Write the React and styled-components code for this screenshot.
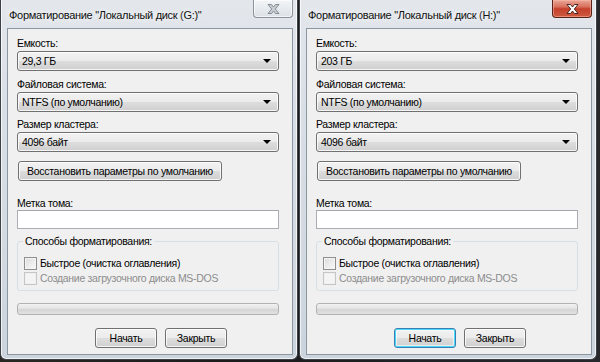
import React from "react";
import styled, { createGlobalStyle, css } from "styled-components";

const GlobalStyle = createGlobalStyle`
  html, body { margin: 0; padding: 0; }
  body {
    width: 600px;
    height: 362px;
    overflow: hidden;
    background: #1c1c1e;
    font-family: "Liberation Sans", Arial, sans-serif;
    font-size: 10.5px;
    letter-spacing: -0.3px;
    color: #000;
  }
`;

const Desktop = styled.div`
  display: flex;
  align-items: flex-start;
  gap: 1px;
  height: 362px;
  background: linear-gradient(90deg, #2a2622 0%, #1b1b1d 40%, #26282c 100%);
`;

const Window = styled.div`
  width: 298px;
  height: 360px;
  box-sizing: border-box;
  display: flex;
  flex-direction: column;
  padding: 0 4px 4px 6px;
  border: 1px solid #3d4248;
  border-top: none;
  border-radius: 0 0 6px 6px;
  background: linear-gradient(180deg, #e3e7ec 0%, #d9dfe6 30%, #d2d9e1 70%, #cbd3dc 100%);
  box-shadow: inset 1px 0 0 rgba(255, 255, 255, 0.7), inset -1px 0 0 rgba(255, 255, 255, 0.7),
    inset 0 -1px 0 rgba(255, 255, 255, 0.7);
`;

const TitleBar = styled.div`
  height: 28px;
  display: flex;
  align-items: flex-start;
  flex-shrink: 0;
`;

const Title = styled.div`
  padding: 8px 0 0 2px;
  line-height: 14px;
  font-size: 11px;
  white-space: nowrap;
  color: #101010;
  text-shadow: 0 0 6px rgba(255, 255, 255, 0.9), 0 0 10px rgba(255, 255, 255, 0.8);
`;

const CloseButton = styled.div`
  margin-left: auto;
  width: 40px;
  height: 18px;
  box-sizing: border-box;
  display: flex;
  align-items: center;
  justify-content: center;
  border-radius: 0 0 4px 4px;
  border: 1px solid #8b949d;
  border-top: none;
  background: linear-gradient(180deg, #f3f5f7 0%, #e7ebef 50%, #dce1e6 100%);
  box-shadow: inset 0 0 0 1px rgba(255, 255, 255, 0.6);
  ${(p) =>
    p.$active &&
    css`
      border-color: #5a2218;
      background: linear-gradient(180deg, #e9a899 0%, #d8705c 40%, #c4402a 52%, #cc5a3f 100%);
      box-shadow: inset 0 0 0 1px rgba(255, 190, 170, 0.5);
    `}
`;

const Client = styled.div`
  flex: 1;
  display: flex;
  flex-direction: column;
  padding: 7px 13px 0 9px;
  background: #f0f0f0;
  border: 1px solid #8a96a2;
`;

const Label = styled.div`
  line-height: 14px;
  margin-top: ${(p) => p.$top || 0}px;
  color: #000;
`;

const Combo = styled.div`
  height: 20px;
  margin-top: 1px;
  box-sizing: border-box;
  display: flex;
  align-items: center;
  padding: 0 7px 0 4px;
  border: 1px solid #707070;
  border-radius: 3px;
  background: linear-gradient(180deg, #f2f2f2 0%, #ebebeb 50%, #dddddd 51%, #cfcfcf 100%);
  box-shadow: inset 0 0 0 1px rgba(255, 255, 255, 0.8);
`;

const Arrow = styled.span`
  margin-left: auto;
  width: 0;
  height: 0;
  border-left: 4px solid transparent;
  border-right: 4px solid transparent;
  border-top: 4px solid #000;
`;

const Button = styled.div`
  height: 20px;
  width: ${(p) => p.$width}px;
  box-sizing: border-box;
  display: flex;
  align-items: center;
  justify-content: center;
  white-space: nowrap;
  border: 1px solid #707070;
  border-radius: 3px;
  background: linear-gradient(180deg, #f2f2f2 0%, #ebebeb 50%, #dddddd 51%, #cfcfcf 100%);
  box-shadow: inset 0 0 0 1px rgba(255, 255, 255, 0.8);
  ${(p) =>
    p.$default &&
    css`
      border-color: #3c7fb1;
      box-shadow: inset 0 0 0 1px #48d8fb, inset 0 0 0 2px rgba(255, 255, 255, 0.6);
    `}
`;

const RestoreButton = styled(Button)`
  margin-top: 9px;
  margin-left: 1px;
`;

const TextInput = styled.div`
  height: 19px;
  box-sizing: border-box;
  border: 1px solid #abadb3;
  border-top-color: #a3a6ad;
  background: #fff;
`;

const Group = styled.div`
  position: relative;
  margin-top: 12px;
  height: 50px;
  box-sizing: border-box;
  padding: 14px 0 0 6px;
  border: 1px solid #d5dfe5;
  border-radius: 3px;
  display: flex;
  flex-direction: column;
  gap: 1px;
`;

const GroupLegend = styled.div`
  position: absolute;
  top: -8px;
  left: 5px;
  padding: 0 2px;
  line-height: 14px;
  background: #f0f0f0;
`;

const CheckRow = styled.div`
  display: flex;
  align-items: center;
  gap: 3px;
  height: 14px;
  color: ${(p) => (p.$disabled ? "#8d8d8d" : "#000")};
`;

const Box = styled.span`
  width: 13px;
  height: 13px;
  box-sizing: border-box;
  border: 1px solid ${(p) => (p.$disabled ? "#c6c6c6" : "#8e8f8f")};
  background: ${(p) =>
    p.$disabled
      ? "#f4f4f4"
      : "linear-gradient(135deg, #dcdcdc 0%, #eeeeee 60%, #fafafa 100%)"};
  box-shadow: inset 0 0 0 1px ${(p) => (p.$disabled ? "#f0f0f0" : "#f4f4f4")};
`;

const Progress = styled.div`
  margin-top: 12px;
  height: 12px;
  box-sizing: border-box;
  border: 1px solid #b2b2b2;
  border-radius: 3px;
  background: linear-gradient(180deg, #f3f3f3 0%, #e3e3e3 45%, #d6d6d6 55%, #e2e2e2 100%);
`;

const Footer = styled.div`
  display: flex;
  gap: 8px;
  margin-top: 13px;
  padding-left: 78px;
`;

function CloseGlyph({ active }) {
  return (
    <svg width="13" height="10" viewBox="0 0 13 10">
      <path
        d="M1 0.5 H4.5 L6.5 3 L8.5 0.5 H12 L8.3 5 L12 9.5 H8.5 L6.5 7 L4.5 9.5 H1 L4.7 5 Z"
        fill={active ? "#ffffff" : "#c9cdd2"}
        stroke={active ? "#3a1a14" : "#7d858d"}
        strokeWidth="0.9"
        strokeLinejoin="round"
      />
    </svg>
  );
}

function FormatWindow({ drive, capacity, active }) {
  return (
    <Window>
      <TitleBar>
        <Title>Форматирование "Локальный диск ({drive}:)"</Title>
        <CloseButton $active={active}>
          <CloseGlyph active={active} />
        </CloseButton>
      </TitleBar>
      <Client>
        <Label>Емкость:</Label>
        <Combo>
          {capacity}
          <Arrow />
        </Combo>
        <Label $top={6}>Файловая система:</Label>
        <Combo>
          NTFS (по умолчанию)
          <Arrow />
        </Combo>
        <Label $top={5}>Размер кластера:</Label>
        <Combo>
          4096 байт
          <Arrow />
        </Combo>
        <RestoreButton $width={204}>Восстановить параметры по умолчанию</RestoreButton>
        <Label $top={15}>Метка тома:</Label>
        <TextInput />
        <Group>
          <GroupLegend>Способы форматирования:</GroupLegend>
          <CheckRow>
            <Box />
            Быстрое (очистка оглавления)
          </CheckRow>
          <CheckRow $disabled>
            <Box $disabled />
            Создание загрузочного диска MS-DOS
          </CheckRow>
        </Group>
        <Progress />
        <Footer>
          <Button $width={62} $default={active}>
            Начать
          </Button>
          <Button $width={62}>Закрыть</Button>
        </Footer>
      </Client>
    </Window>
  );
}

export default function App() {
  return (
    <>
      <GlobalStyle />
      <Desktop>
        <FormatWindow drive="G" capacity="29,3 ГБ" />
        <FormatWindow drive="H" capacity="203 ГБ" active />
      </Desktop>
    </>
  );
}
